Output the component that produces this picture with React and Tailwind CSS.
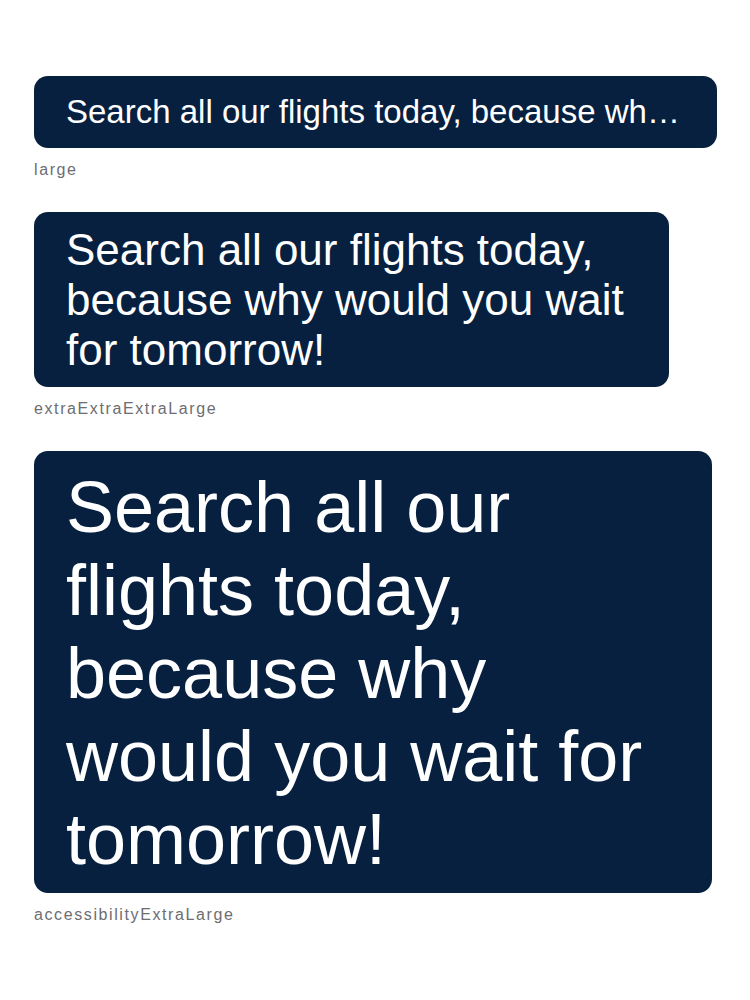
export default function App() {
  const text = "Search all our flights today, because why would you wait for tomorrow!";

  return (
    <div className="min-h-screen bg-white px-[34px] pt-[76px] font-['Liberation_Sans',Arial,sans-serif]">
      <div className="flex flex-col gap-[32px]">

        {/* LARGE */}
        <div>
          <div className="w-[683px] rounded-[14px] bg-[#072040] pl-8 pr-8 py-[17px] text-white text-[33px] leading-[38px] whitespace-nowrap overflow-hidden text-ellipsis">
            {text}
          </div>
          <div className="mt-[12px] text-[16px] leading-5 tracking-[1.6px] text-[#6d6d72]">
            large
          </div>
        </div>

        {/* XXXL */}
        <div>
          <div className="w-[635px] rounded-[14px] bg-[#072040] pl-8 pr-8 pt-[13px] pb-[12px] text-white text-[44px] leading-[50px]">
            {text}
          </div>
          <div className="mt-[12px] text-[16px] leading-5 tracking-[1.6px] text-[#6d6d72]">
            extraExtraExtraLarge
          </div>
        </div>

        {/* ACCESSIBILITY XL */}
        <div>
          <div className="w-[678px] rounded-[14px] bg-[#072040] pl-8 pr-8 pt-[15px] pb-[12px] text-white text-[72px] leading-[83px]">
            {text}
          </div>
          <div className="mt-[12px] text-[16px] leading-5 tracking-[1.6px] text-[#6d6d72]">
            accessibilityExtraLarge
          </div>
        </div>

      </div>
    </div>
  );
}
